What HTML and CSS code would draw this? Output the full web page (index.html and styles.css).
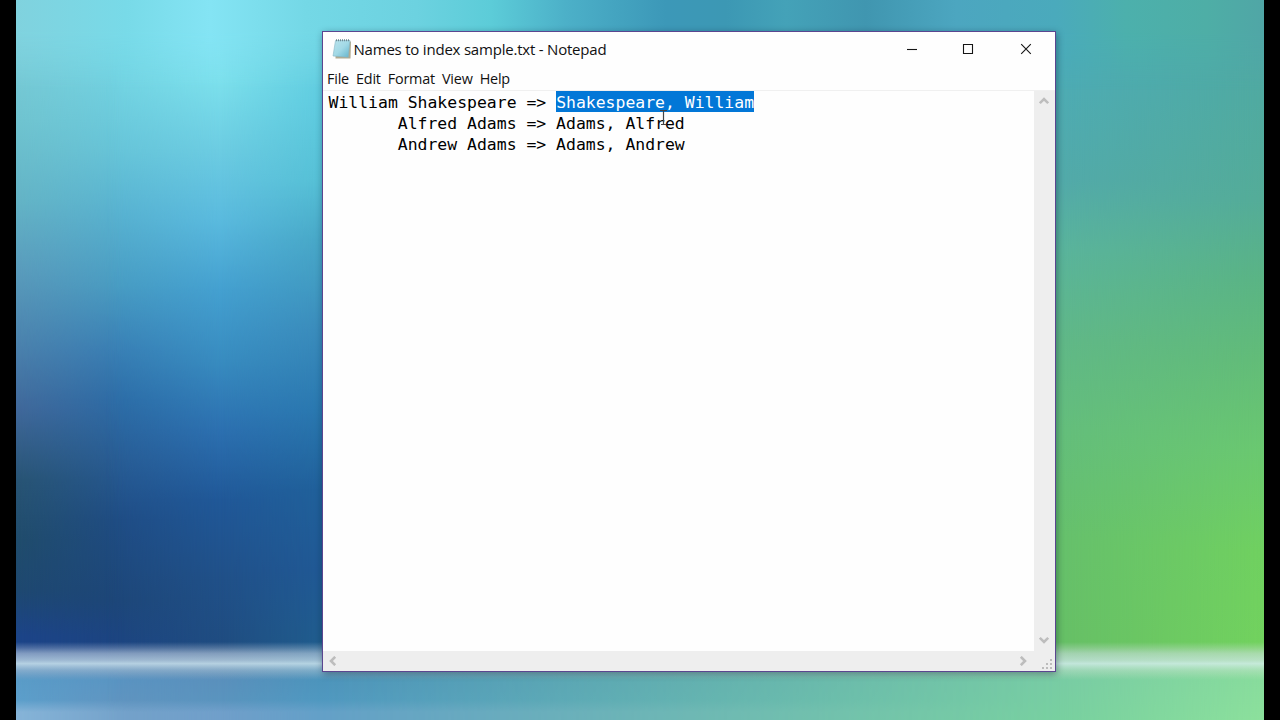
FILE: index.html
```
<!DOCTYPE html>
<html lang="en">
<head>
  <meta charset="UTF-8" />
  <meta name="viewport" content="width=device-width, initial-scale=1.0"/>
  <title>Names to index sample.txt - Notepad</title>
  <link rel="stylesheet" href="styles.css">
</head>
<body>
  <div class="desktop">
    <div class="wallpaper">
      <div class="sky sky-1"></div>
      <div class="sky sky-2"></div>
      <div class="sky sky-3"></div>
      <div class="sky sky-4"></div>
      <div class="sky sky-5"></div>
      <div class="sky sky-6"></div>
      <div class="sky sky-top"></div>
      <div class="horizon"></div>
    </div>

    <div class="window">
      <div class="title-bar">
        <svg class="app-icon" width="20" height="22" viewBox="0 0 20 22">
          <path d="M4 4 L19 3.5 L18.5 20.5 L3.5 20.5 Z" fill="#b0aa90"/>
          <path d="M3.5 2.5 L18 2.5 L16.2 19.2 L1 18 Z" fill="url(#pad)" stroke="#86b6c4" stroke-width=".6"/>
          <path d="M4 2.2 H18" stroke="#6c8a92" stroke-width="2" stroke-dasharray="1 1"/>
          <defs>
            <linearGradient id="pad" x1="0" y1="0" x2="1" y2="1">
              <stop offset="0" stop-color="#b9e3ec"/>
              <stop offset=".5" stop-color="#a2d9e6"/>
              <stop offset="1" stop-color="#62b4cc"/>
            </linearGradient>
          </defs>
        </svg>
        <span class="title">Names to index sample.txt - Notepad</span>
        <div class="window-buttons">
          <button aria-label="Minimize"><svg width="12" height="12" viewBox="0 0 12 12"><path d="M1 6.5 H11"/></svg></button>
          <button aria-label="Maximize"><svg width="12" height="12" viewBox="0 0 12 12"><path d="M1.5 1.5 H10.5 V10.5 H1.5 Z"/></svg></button>
          <button aria-label="Close"><svg width="12" height="12" viewBox="0 0 12 12"><path d="M1.2 1.2 L10.8 10.8 M10.8 1.2 L1.2 10.8"/></svg></button>
        </div>
      </div>

      <div class="menu-bar">
        <span>File</span>
        <span>Edit</span>
        <span>Format</span>
        <span>View</span>
        <span>Help</span>
      </div>

      <div class="editor">
        <pre class="text">William Shakespeare =&gt; <span class="selected">Shakespeare, William</span>
       Alfred Adams =&gt; Adams, Alfred
       Andrew Adams =&gt; Adams, Andrew</pre>
        <div class="scroll-y">
          <svg width="10" height="9" viewBox="0 0 10 9"><path d="M.8 7.2 L5 3 L9.2 7.2"/></svg>
          <svg width="10" height="9" viewBox="0 0 10 9"><path d="M.8 1.8 L5 6 L9.2 1.8"/></svg>
        </div>
        <div class="scroll-x">
          <svg width="9" height="10" viewBox="0 0 9 10"><path d="M7.2 .8 L3 5 L7.2 9.2"/></svg>
          <svg width="9" height="10" viewBox="0 0 9 10"><path d="M1.8 .8 L6 5 L1.8 9.2"/></svg>
        </div>
        <div class="grip">
          <svg width="10" height="10" viewBox="0 0 10 10"><path d="M8 0h2v2h-2z M4 4h2v2h-2z M8 4h2v2h-2z M0 8h2v2h-2z M4 8h2v2h-2z M8 8h2v2h-2z"/></svg>
        </div>
      </div>
    </div>

    <svg class="cursor" width="9" height="17" viewBox="0 0 9 17"><path d="M1 1.5 H8 M4.5 2 V15 M2 15.5 H7"/></svg>
  </div>
</body>
</html>
```
FILE: styles.css
```
* {
  margin: 0;
  padding: 0;
  box-sizing: border-box;
}

body {
  width: 1280px;
  height: 720px;
  overflow: hidden;
  background: #000;
  padding: 0 16px;
  font-family: 'Segoe UI', 'Open Sans', sans-serif;
  color: #111;
}

.desktop {
  position: relative;
  display: grid;
  width: 1248px;
  height: 720px;
}

.wallpaper {
  grid-area: 1 / 1;
  display: grid;
  width: 1248px;
  height: 720px;
}

.sky,
.horizon {
  grid-area: 1 / 1;
}

/* each strip fades in over the one before it */
.sky-1 {
  background: linear-gradient(#80d2de 0, #70c4d0 120px, #64b4c6 200px, #5a9cbc 270px, #4a80ac 350px, #40689a 410px, #285474 480px, #204c6c 540px, #1e4870 590px, #1c4488 635px, #1c4488 648px, #5a9cc8 680px, #5c9fcb 700px, #86b4d8 712px);
}

.sky-2 {
  background: linear-gradient(#76dae8 0, #70d0e0 90px, #66c4d8 150px, #58b2d0 210px, #489cc2 285px, #387eb4 350px, #2c6ca6 400px, #285c94 460px, #1f4c84 520px, #1d4678 600px, #1c4482 648px, #5a94c2 680px, #6094c0 700px, #74a2ca 712px);
  -webkit-mask-image: linear-gradient(90deg, transparent 0, #000 110px);
  mask-image: linear-gradient(90deg, transparent 0, #000 110px);
}

.sky-3 {
  background: linear-gradient(#84e4f4 0, #7ce0ec 80px, #6ccce2 150px, #5abade 220px, #44a0d0 290px, #388cc0 360px, #2c70b0 430px, #205898 500px, #205088 580px, #1f4c80 648px, #5a90bc 680px, #5a94be 700px, #709fca 712px);
  -webkit-mask-image: linear-gradient(90deg, transparent 90px, #000 205px);
  mask-image: linear-gradient(90deg, transparent 90px, #000 205px);
}

.sky-4 {
  background: linear-gradient(#72d6e4 0, #60cce0 100px, #56c0d6 180px, #48a8c8 240px, #3a8cbc 330px, #2a78b0 410px, #20609a 490px, #205894 570px, #205c8c 648px, #4d94bc 680px, #5098c0 700px, #64a0c8 712px);
  -webkit-mask-image: linear-gradient(90deg, transparent 205px, #000 300px);
  mask-image: linear-gradient(90deg, transparent 205px, #000 300px);
}

.sky-5 {
  background: linear-gradient(#48acbc 0, #4eacb4 90px, #52aaaa 180px, #5ab49c 250px, #60b888 340px, #64be7c 430px, #66c06c 540px, #66bf66 648px, #78cca4 680px, #78d0a0 720px);
  -webkit-mask-image: linear-gradient(90deg, transparent 300px, #000 1040px);
  mask-image: linear-gradient(90deg, transparent 300px, #000 1040px);
}

.sky-6 {
  background: linear-gradient(#50a8a8 0, #50aaa0 100px, #54ac98 200px, #5ab484 280px, #62bc78 360px, #6ac870 450px, #70d060 550px, #72d25e 648px, #88dc9c 680px, #8ce09c 720px);
  -webkit-mask-image: linear-gradient(90deg, transparent 1040px, #000 1248px);
  mask-image: linear-gradient(90deg, transparent 1040px, #000 1248px);
}

/* band of light visible above the window */
.sky-top {
  align-self: start;
  height: 90px;
  background: linear-gradient(90deg, #80d2de 0, #78dae8 110px, #84e4f4 194px, #74d8e6 290px, #6cd2e0 400px, #5cccd8 475px, #4cb0c8 550px, #3c98b8 650px, #3c98b4 710px, #44a2b8 770px, #4096b0 850px, #4ca6c0 940px, #4aaabc 1040px, #4cb0ac 1110px, #4eaea6 1190px, #50a6a6 1248px);
  -webkit-mask-image: linear-gradient(#000 35%, transparent);
  mask-image: linear-gradient(#000 35%, transparent);
}

.horizon {
  align-self: start;
  height: 38px;
  margin-top: 642px;
  background: linear-gradient(rgba(218, 226, 238, 0), rgba(218, 226, 238, .5) 30%, rgba(218, 232, 240, .64) 48%, rgba(220, 240, 246, .76) 57%, rgba(218, 234, 240, .4) 75%, rgba(218, 232, 240, 0));
  z-index: 1;
}

.window {
  grid-area: 1 / 1;
  display: flex;
  flex-direction: column;
  width: 734px;
  height: 641px;
  margin: 31px 0 0 306px;
  background: #fefefe;
  border: 1px solid #5b4690;
  box-shadow: 1px 2px 7px rgba(0, 20, 40, .4);
  z-index: 2;
}

.title-bar {
  display: flex;
  align-items: center;
  height: 35px;
  padding: 0 0 2px 8.5px;
}

.title {
  margin-left: 2px;
  font-size: 15px;
  letter-spacing: -.21px;
  white-space: nowrap;
}

.window-buttons {
  display: flex;
  margin-left: auto;
}

.window-buttons button {
  display: flex;
  align-items: center;
  justify-content: center;
  width: 57.4px;
  height: 33px;
  background: none;
  border: none;
}

.window-buttons button:nth-child(2) {
  padding-right: 1px;
}

.window-buttons path {
  fill: none;
  stroke: #151515;
  stroke-width: 1.1;
}

.menu-bar {
  display: flex;
  gap: 7px;
  height: 24px;
  padding-left: 4px;
  font-size: 14.4px;
  letter-spacing: -.2px;
  line-height: 24px;
  border-bottom: 1px solid #f0f0f0;
}

.editor {
  display: grid;
  grid-template-columns: 1fr 21px;
  grid-template-rows: 1fr 20px;
  flex-grow: 1;
}

.text {
  padding: 1px 0 0 5.5px;
  font-family: Consolas, 'DejaVu Sans Mono', monospace;
  font-size: 16.45px;
  line-height: 21.1px;
  color: #000;
}

.selected {
  display: inline-block;
  height: 20px;
  background: #0277d7;
  box-shadow: 0 -1px #0277d7;
  color: #fff;
}

.scroll-y,
.scroll-x,
.grip {
  display: flex;
  background: #eee;
}

.scroll-y {
  flex-direction: column;
  align-items: center;
  justify-content: space-between;
  padding: 5px 2px 6px 0;
}

.scroll-x {
  align-items: center;
  justify-content: space-between;
  padding: 0 6px 1px 5px;
}

.scroll-y path,
.scroll-x path {
  fill: none;
  stroke: #bdbdbd;
  stroke-width: 2.6;
}

.grip {
  align-items: flex-end;
  justify-content: flex-end;
  padding: 2px 3px;
}

.grip path {
  fill: #bcbcbc;
}

/* text pointer floats over the document */
.cursor {
  position: absolute;
  left: 643px;
  top: 109px;
  z-index: 3;
}

.cursor path {
  fill: none;
  stroke: #444;
  stroke-width: 1.2;
}
```
